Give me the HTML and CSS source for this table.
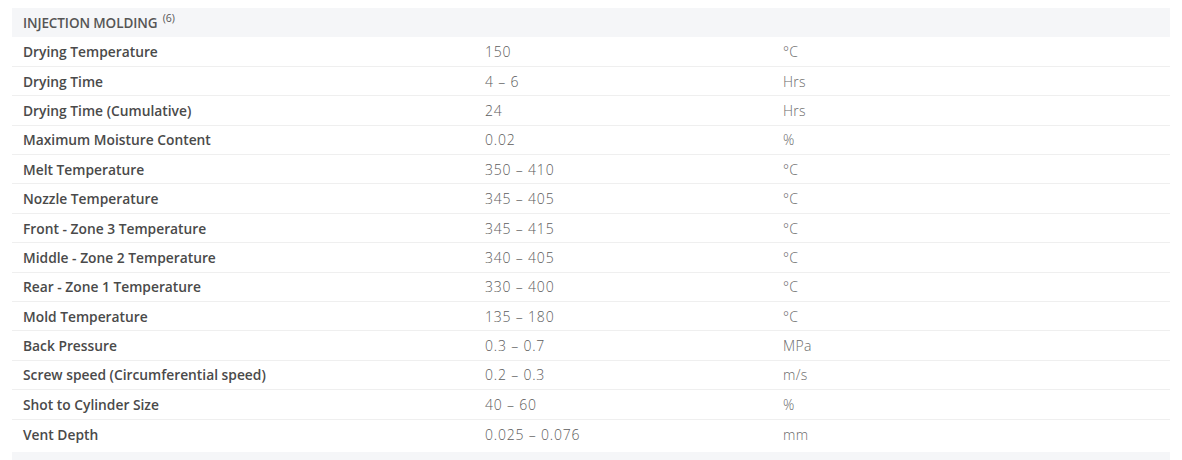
FILE: index.html
```html
<!DOCTYPE html>
<html>
<head>
<meta charset="utf-8">
<link rel="stylesheet" href="styles.css">
</head>
<body>
<div class="page">
  <table class="spec">
    <colgroup>
      <col class="c-label">
      <col class="c-val">
      <col class="c-unit">
    </colgroup>
    <thead>
      <tr class="head"><th colspan="3">INJECTION MOLDING <sup>(6)</sup></th></tr>
    </thead>
    <tbody>
      <tr><td class="label">Drying Temperature</td><td class="val">150</td><td class="unit">°C</td></tr>
      <tr><td class="label">Drying Time</td><td class="val">4 – 6</td><td class="unit">Hrs</td></tr>
      <tr><td class="label">Drying Time (Cumulative)</td><td class="val">24</td><td class="unit">Hrs</td></tr>
      <tr><td class="label">Maximum Moisture Content</td><td class="val">0.02</td><td class="unit">%</td></tr>
      <tr><td class="label">Melt Temperature</td><td class="val">350 – 410</td><td class="unit">°C</td></tr>
      <tr><td class="label">Nozzle Temperature</td><td class="val">345 – 405</td><td class="unit">°C</td></tr>
      <tr><td class="label">Front - Zone 3 Temperature</td><td class="val">345 – 415</td><td class="unit">°C</td></tr>
      <tr><td class="label">Middle - Zone 2 Temperature</td><td class="val">340 – 405</td><td class="unit">°C</td></tr>
      <tr><td class="label">Rear - Zone 1 Temperature</td><td class="val">330 – 400</td><td class="unit">°C</td></tr>
      <tr><td class="label">Mold Temperature</td><td class="val">135 – 180</td><td class="unit">°C</td></tr>
      <tr><td class="label">Back Pressure</td><td class="val">0.3 – 0.7</td><td class="unit">MPa</td></tr>
      <tr><td class="label">Screw speed (Circumferential speed)</td><td class="val">0.2 – 0.3</td><td class="unit">m/s</td></tr>
      <tr><td class="label">Shot to Cylinder Size</td><td class="val">40 – 60</td><td class="unit">%</td></tr>
      <tr class="last"><td class="label">Vent Depth</td><td class="val">0.025 – 0.076</td><td class="unit">mm</td></tr>
    </tbody>
  </table>
  <div class="next"></div>
</div>
</body>
</html>
```
FILE: styles.css
```css
html, body {
  margin: 0;
  padding: 0;
  background: #ffffff;
}
.page {
  padding: 8px 12px 0 12px;
  font-family: "Open Sans", "Noto Sans", sans-serif;
}
.spec {
  width: 100%;
  border-collapse: collapse;
  table-layout: fixed;
}
.c-label { width: 462px; }
.c-val { width: 298px; }
.c-unit { width: auto; }
.head th {
  background: #f5f6f8;
  height: 29px;
  padding: 0 11px;
  text-align: left;
  font-size: 13.5px;
  font-weight: 600;
  color: #555555;
  letter-spacing: -0.1px;
}
.head sup {
  font-size: 10.5px;
  font-weight: 400;
  vertical-align: 6px;
  line-height: 0;
  margin-left: 2px;
}
.spec td {
  height: 29.4px;
  padding: 0 11px;
  border-bottom: 1px solid #efefef;
  font-size: 14px;
  box-sizing: border-box;
}
.spec tr.last td {
  border-bottom: none;
}
.spec td.label {
  font-size: 13.8px;
  font-weight: 600;
  color: #4a4a4a;
  letter-spacing: 0;
}
.val {
  font-weight: 300;
  color: #5c5c5c;
  letter-spacing: 0.8px;
}
.spec td.unit {
  font-size: 14px;
  font-weight: 300;
  color: #6a6a6a;
  letter-spacing: 0.3px;
}
.next {
  margin-top: 4px;
  height: 20px;
  background: #f5f6f8;
}
```
